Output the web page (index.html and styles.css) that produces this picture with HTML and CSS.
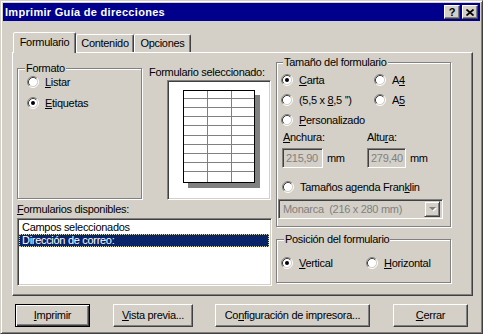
FILE: index.html
```html
<!DOCTYPE html>
<html lang="es">
<head>
<meta charset="utf-8">
<title>Imprimir Guía de direcciones</title>
<link rel="stylesheet" href="styles.css">
</head>
<body>
<svg class="defs" aria-hidden="true">
  <symbol id="radio" viewBox="0 0 12 12">
    <circle cx="6" cy="6" r="4.5" fill="#fff"/>
    <path d="M2.11 9.89A5.5 5.5 0 0 1 9.89 2.11" fill="none" stroke="#808080"/>
    <path d="M9.89 2.11A5.5 5.5 0 0 1 2.11 9.89" fill="none" stroke="#fff"/>
    <path d="M2.82 9.18A4.5 4.5 0 0 1 9.18 2.82" fill="none" stroke="#404040"/>
    <path d="M9.18 2.82A4.5 4.5 0 0 1 2.82 9.18" fill="none" stroke="#d4d0c8"/>
  </symbol>
  <symbol id="radio-on" viewBox="0 0 12 12">
    <use href="#radio"/>
    <circle cx="6" cy="6" r="2" fill="#000"/>
  </symbol>
</svg>
<div class="window">
  <div class="titlebar">
    <span class="title">Imprimir Guía de direcciones</span>
    <span class="tbtn help">?</span>
    <span class="tbtn close"><svg width="8" height="7" viewBox="0 0 8 7"><path d="M0.5 0.5L7.5 6.5M7.5 0.5L0.5 6.5" stroke="#000" stroke-width="1.7" fill="none"/></svg></span>
  </div>
  <div class="client">
    <div class="tabs">
      <div class="tab active">Formulario</div>
      <div class="tab t-cont">Contenido</div>
      <div class="tab t-opc">Opciones</div>
    </div>
    <div class="panel">
      <div class="col-left">
        <div class="row-top">
          <div class="group formato">
            <span class="legend">Formato</span>
            <div class="radio"><svg class="rb"><use href="#radio"/></svg><span><u>L</u>istar</span></div>
            <div class="radio"><svg class="rb"><use href="#radio-on"/></svg><span><u>E</u>tiquetas</span></div>
          </div>
          <div class="selected">
            <div class="lbl">Formulario seleccionado:</div>
            <div class="preview">
              <svg width="100" height="116" viewBox="0 0 100 116">
                <rect x="19" y="13" width="72" height="93" fill="#808080"/>
                <rect x="14" y="8" width="72" height="93" fill="#fff"/>
                <g stroke="#808080" stroke-width="1">
                  <path d="M38.5 8V101M62.5 8V101"/>
                  <path d="M14 16.5H86M14 25.5H86M14 34.5H86M14 43.5H86M14 53.5H86M14 62.5H86M14 71.5H86M14 80.5H86M14 89.5H86"/>
                </g>
                <rect x="14.5" y="8.5" width="71" height="92" fill="none" stroke="#000"/>
              </svg>
            </div>
          </div>
        </div>
        <div class="lbl list-lbl"><u>F</u>ormularios disponibles:</div>
        <div class="listbox">
          <div class="item">Campos seleccionados</div>
          <div class="item sel">Dirección de correo:</div>
        </div>
      </div>
      <div class="col-right">
        <div class="group tamano">
          <span class="legend">Tamaño del formulario</span>
          <div class="rrow">
            <div class="radio c1"><svg class="rb"><use href="#radio-on"/></svg><span><u>C</u>arta</span></div>
            <div class="radio"><svg class="rb"><use href="#radio"/></svg><span>A<u>4</u></span></div>
          </div>
          <div class="rrow">
            <div class="radio c1"><svg class="rb"><use href="#radio"/></svg><span>(5,5 x <u>8</u>,5 '')</span></div>
            <div class="radio"><svg class="rb"><use href="#radio"/></svg><span>A<u>5</u></span></div>
          </div>
          <div class="rrow">
            <div class="radio"><svg class="rb"><use href="#radio"/></svg><span><u>P</u>ersonalizado</span></div>
          </div>
          <div class="flabels">
            <span class="fl1"><u>A</u>nchura:</span>
            <span>Altu<u>r</u>a:</span>
          </div>
          <div class="fields">
            <div class="field f1"><span class="edit w1">215,90</span><span>mm</span></div>
            <div class="field"><span class="edit w2">279,40</span><span>mm</span></div>
          </div>
          <div class="rrow franklin">
            <div class="radio"><svg class="rb"><use href="#radio"/></svg><span>Tamaños agenda Fran<u>k</u>lin</span></div>
          </div>
          <div class="combo">
            <span class="combo-text">Monarca  (216 x 280 mm)</span>
            <span class="combo-btn"><svg width="7" height="5" viewBox="0 0 7 5"><path d="M1 1H8L4.5 4.5Z" fill="#fff"/><path d="M0 0H7L3.5 3.5Z" fill="#808080"/></svg></span>
          </div>
        </div>
        <div class="group posicion">
          <span class="legend">Posición del formulario</span>
          <div class="rrow">
            <div class="radio c2"><svg class="rb"><use href="#radio-on"/></svg><span><u>V</u>ertical</span></div>
            <div class="radio"><svg class="rb"><use href="#radio"/></svg><span><u>H</u>orizontal</span></div>
          </div>
        </div>
      </div>
    </div>
    <div class="buttons">
      <div class="btn default b1"><span><u>I</u>mprimir</span></div>
      <div class="btn b2"><span><u>V</u>ista previa...</span></div>
      <div class="btn b3"><span>Co<u>n</u>figuración de impresora...</span></div>
      <div class="btn b4"><span><u>C</u>errar</span></div>
    </div>
  </div>
</div>
</body>
</html>
```
FILE: styles.css
```css
* { box-sizing: border-box; }
html, body { margin: 0; padding: 0; }
body {
  background: #d4d0c8;
  font-family: "Liberation Sans", Arial, sans-serif;
  font-size: 11px;
  letter-spacing: -0.3px;
  color: #000;
}
u { text-decoration: underline; text-underline-offset: 1px; }
.defs { position: absolute; width: 0; height: 0; overflow: hidden; }

.window {
  width: 483px;
  height: 334px;
  background: #d4d0c8;
  border: 1px solid;
  border-color: #d4d0c8 #404040 #404040 #d4d0c8;
  box-shadow: inset 1px 1px 0 #fff, inset -1px -1px 0 #808080;
  padding: 2px;
  display: flex;
  flex-direction: column;
}

.titlebar {
  height: 18px;
  background: #00008c;
  color: #fff;
  display: flex;
  align-items: center;
  padding: 0 2px;
}
.title { flex: 1; font-weight: bold; letter-spacing: 0.3px; line-height: 13px; }
.tbtn {
  width: 16px;
  height: 14px;
  background: #d4d0c8;
  color: #000;
  border: 1px solid;
  border-color: #fff #404040 #404040 #fff;
  box-shadow: inset -1px -1px 0 #808080;
  display: flex;
  align-items: center;
  justify-content: center;
  font-weight: bold;
  font-size: 11px;
  line-height: 11px;
  letter-spacing: 0;
}
.tbtn.close { margin-left: 2px; }

.client { padding: 11px 7px 0 9px; }

.tabs { display: flex; align-items: flex-end; height: 20px; }
.tab {
  height: 18px;
  border: 1px solid;
  border-bottom: none;
  border-color: #fff #404040 transparent #fff;
  border-radius: 2px 2px 0 0;
  box-shadow: inset -1px 0 0 #808080;
  background: #d4d0c8;
  display: flex;
  align-items: center;
  justify-content: center;
  line-height: 13px;
}
.tab.active {
  width: 63px;
  height: 21px;
  margin-left: 1px;
  margin-bottom: -1px;
  position: relative;
  z-index: 1;
  padding-bottom: 2px;
}
.t-cont { width: 58px; }
.t-opc { width: 57px; }

.panel {
  width: 461px;
  height: 244px;
  border: 1px solid;
  border-color: #fff #404040 #404040 #fff;
  box-shadow: inset -1px -1px 0 #808080;
  display: flex;
  padding-left: 4px;
}

.col-left { width: 255px; flex: none; display: flex; flex-direction: column; }
.row-top { display: flex; align-items: flex-start; }

.group {
  position: relative;
  border: 1px solid #808080;
  box-shadow: 1px 1px 0 #fff, inset 1px 1px 0 #fff;
}
.legend {
  position: absolute;
  top: -7px;
  left: 6px;
  padding: 0 1px;
  background: #d4d0c8;
  line-height: 13px;
  white-space: nowrap;
}

.radio { display: flex; align-items: center; gap: 6px; height: 20px; line-height: 13px; white-space: nowrap; }
.rb { width: 12px; height: 12px; flex: none; display: block; }

.formato {
  margin-top: 15px;
  width: 125px;
  height: 131px;
  padding: 3px 0 0 9px;
  display: flex;
  flex-direction: column;
  gap: 1px;
}
.formato .legend { left: 7px; }

.selected { margin: 13px 0 0 7px; display: flex; flex-direction: column; }
.lbl { line-height: 13px; white-space: nowrap; }
.preview {
  margin: 1px 0 0 18px;
  width: 104px;
  height: 120px;
  background: #fff;
  padding: 1px;
  border: 1px solid;
  border-color: #808080 #fff #fff #808080;
  box-shadow: inset 1px 1px 0 #404040, inset -1px -1px 0 #d4d0c8;
}
.preview svg { display: block; }

.list-lbl { margin-top: 3px; }
.listbox {
  margin-top: 2px;
  width: 255px;
  height: 68px;
  background: #fff;
  border: 1px solid;
  border-color: #808080 #fff #fff #808080;
  box-shadow: inset 1px 1px 0 #404040, inset -1px -1px 0 #d4d0c8;
  padding: 2px 2px 0 1px;
}
.item { height: 13px; line-height: 13px; padding-left: 3px; white-space: nowrap; }
.item.sel {
  background: #0a246a;
  color: #fff;
  outline: 1px dotted #d8d890;
  outline-offset: -1px;
}

.col-right { margin-left: 4px; width: 175px; flex: none; display: flex; flex-direction: column; }
.tamano { margin-top: 9px; height: 165px; padding-top: 7px; }
.tamano .legend { left: 6px; }
.rrow { display: flex; margin-left: 4px; }
.rrow .c1 { width: 93px; }
.rrow .c2 { width: 85px; }
.flabels { display: flex; margin: 1px 0 0 6px; line-height: 13px; }
.fl1 { width: 84px; }
.fields { display: flex; margin: 4px 0 0 5px; }
.field { display: flex; align-items: center; gap: 4px; }
.field.f1 { width: 85px; }
.edit {
  height: 20px;
  border: 1px solid;
  border-color: #808080 #fff #fff #808080;
  box-shadow: inset 1px 1px 0 #404040, inset -1px -1px 0 #d4d0c8;
  background: #d4d0c8;
  color: #808080;
  line-height: 18px;
  padding-left: 3px;
}
.w1 { width: 41px; }
.w2 { width: 39px; }
.franklin { margin: 9px 0 0 5px; }
.combo {
  margin: 2px 0 0 1px;
  width: 165px;
  height: 20px;
  border: 1px solid;
  border-color: #808080 #fff #fff #808080;
  box-shadow: inset 1px 1px 0 #404040, inset -1px -1px 0 #d4d0c8;
  background: #d4d0c8;
  display: flex;
  align-items: center;
  padding: 2px;
}
.combo-text { flex: 1; color: #808080; white-space: pre; line-height: 16px; padding-left: 2px; }
.combo-btn {
  width: 16px;
  height: 16px;
  border: 1px solid;
  border-color: #d4d0c8 #404040 #404040 #d4d0c8;
  box-shadow: inset 1px 1px 0 #fff, inset -1px -1px 0 #808080;
  display: flex;
  align-items: center;
  justify-content: center;
}
.combo-btn svg { display: block; overflow: visible; }

.posicion { margin-top: 12px; height: 44px; padding-top: 13px; }
.posicion .legend { left: 7px; }

.buttons { display: flex; margin: 8px 0 0 3px; }
.btn {
  height: 23px;
  border: 1px solid;
  border-color: #fff #404040 #404040 #fff;
  box-shadow: inset -1px -1px 0 #808080;
  display: flex;
  align-items: center;
  justify-content: center;
  line-height: 13px;
  white-space: nowrap;
}
.btn.default {
  border-color: #000;
  box-shadow: inset 1px 1px 0 #fff, inset -1px -1px 0 #404040, inset -2px -2px 0 #808080;
}
.b1 { width: 75px; }
.b2 { width: 80px; margin-left: 23px; }
.b3 { width: 155px; margin-left: 22px; }
.b4 { width: 75px; margin-left: 23px; }
```
